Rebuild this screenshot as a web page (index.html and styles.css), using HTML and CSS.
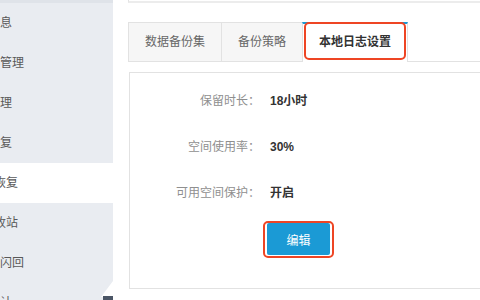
FILE: index.html
```html
<!DOCTYPE html>
<html lang="zh-CN">
<head>
  <meta charset="UTF-8">
  <meta name="viewport" content="width=device-width, initial-scale=1.0">
  <title>备份恢复</title>
  <link rel="stylesheet" href="styles.css">
</head>
<body>
  <div class="layout">
    <aside class="sidebar">
      <ul class="nav">
        <li><span>信息</span></li>
        <li><span>户管理</span></li>
        <li><span>管理</span></li>
        <li><span>恢复</span></li>
        <li class="active deep"><span>份恢复</span></li>
        <li class="deep"><span>回收站</span></li>
        <li><span>库闪回</span></li>
        <li><span>审计</span></li>
      </ul>
      <div class="fold"></div>
      <div class="toggle"></div>
    </aside>

    <main class="main">
      <div class="top-card"></div>

      <div class="tabs">
        <div class="tab">数据备份集</div>
        <div class="tab">备份策略</div>
        <div class="tab active">本地日志设置<span class="mark"></span></div>
        <div class="tab-rest"></div>
      </div>

      <div class="panel">
        <div class="row">
          <span class="label">保留时长：</span>
          <span class="value">18小时</span>
        </div>
        <div class="row">
          <span class="label">空间使用率：</span>
          <span class="value">30%</span>
        </div>
        <div class="row">
          <span class="label">可用空间保护：</span>
          <span class="value">开启</span>
        </div>
        <div class="actions">
          <button class="btn">编辑<span class="mark btn-mark"></span></button>
        </div>
      </div>
    </main>
  </div>
</body>
</html>
```

FILE: styles.css
```css
:root {
  --sidebar-bg: #e9ecf1;
  --border: #e2e2e2;
  --tab-bg: #f6f6f6;
  --blue: #1b9ad5;
  --mark: #ee4524;
  --muted: #8f8f8f;
  --text: #333;
}
* {
  box-sizing: border-box;
}
body {
  margin: 0;
  width: 480px;
  height: 300px;
  overflow: hidden;
  background: #fff;
  font-family: "Liberation Sans", "Noto Sans CJK SC", sans-serif;
  font-size: 12px;
  color: var(--text);
}
.layout {
  display: flex;
  height: 300px;
}

/* sidebar */
.sidebar {
  position: relative;
  width: 113px;
  flex-shrink: 0;
  background: var(--sidebar-bg);
  border-top: 3px solid #dfe3e9;
  overflow: hidden;
}
.nav {
  list-style: none;
  margin: 0;
  padding: 0;
}
.nav li {
  height: 40px;
  line-height: 40px;
  color: #595959;
  white-space: nowrap;
}
.nav li span {
  display: inline-block;
  margin-left: -12px;
}
.nav li.deep span {
  margin-left: -18px;
}
.nav li.active {
  background: #fff;
}
.fold {
  position: absolute;
  right: 0;
  bottom: 3px;
  width: 0;
  height: 0;
  border-left: 12px solid transparent;
  border-bottom: 16px solid #fff;
}
.toggle {
  position: absolute;
  right: 0;
  bottom: 0;
  width: 10px;
  height: 4px;
  background: #4b5666;
}

/* main area */
.main {
  flex: 1;
  padding-left: 15px;
  min-width: 0;
}
.top-card {
  height: 3px;
  border-left: 1px solid var(--border);
  border-bottom: 2px solid #ececec;
}
.tabs {
  display: flex;
  margin-top: 19px;
  height: 40px;
}
.tab {
  position: relative;
  height: 40px;
  line-height: 38px;
  padding: 0 16px;
  background: var(--tab-bg);
  border: 1px solid var(--border);
  border-right: none;
  color: #666;
  white-space: nowrap;
}
.tab.active {
  background: #fff;
  border-top: 2px solid var(--blue);
  border-right: 1px solid var(--border);
  border-bottom: none;
  font-weight: bold;
  color: #333;
  line-height: 36px;
}
.tab-rest {
  flex: 1;
  border-bottom: 1px solid var(--border);
}
.mark {
  position: absolute;
  border: 2px solid var(--mark);
  border-radius: 5px;
}
.tab .mark {
  top: -2px;
  left: 1px;
  right: 1px;
  bottom: 2px;
}

/* settings panel */
.panel {
  margin-top: 10px;
  margin-left: 1px;
  margin-right: -20px;
  height: 217px;
  border: 1px solid var(--border);
  padding-top: 18px;
  display: flex;
  flex-direction: column;
  gap: 26px;
}
.row {
  display: flex;
  height: 20px;
  line-height: 20px;
  gap: 10px;
}
.label {
  width: 130px;
  text-align: right;
  color: var(--muted);
}
.value {
  font-weight: bold;
  color: var(--text);
}
.actions {
  padding-left: 137px;
  margin-top: -6px;
}
.btn {
  position: relative;
  width: 63px;
  height: 32px;
  border: none;
  border-radius: 2px;
  background: var(--blue);
  color: #fff;
  font-family: inherit;
  font-size: 12px;
  cursor: pointer;
}
.btn-mark {
  top: -2px;
  left: -4px;
  right: -4px;
  bottom: -3px;
}
```
